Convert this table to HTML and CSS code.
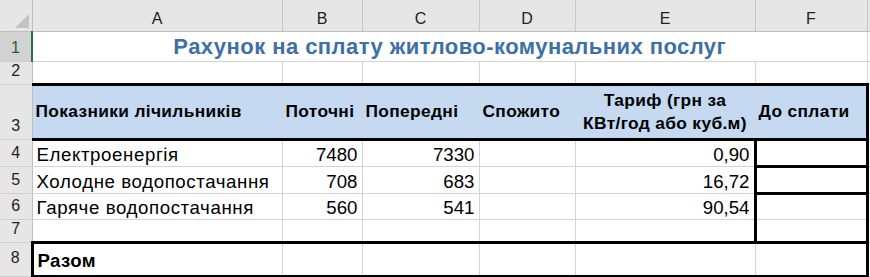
FILE: index.html
```html
<!DOCTYPE html>
<html lang="uk">
<head>
<meta charset="utf-8">
<link rel="stylesheet" href="styles.css">
</head>
<body>
<table class="sheet">
  <colgroup>
    <col class="c-rh"><col class="c-a"><col class="c-b"><col class="c-c"><col class="c-d"><col class="c-e"><col class="c-f"><col class="c-g">
  </colgroup>
  <tr class="r-colhdr">
    <th class="corner"><svg class="tri" width="14" height="14" viewBox="0 0 14 14"><polygon points="14,0 14,14 0,14" fill="#c3c3c3"/></svg></th>
    <th class="ch">A</th><th class="ch">B</th><th class="ch">C</th><th class="ch">D</th><th class="ch">E</th><th class="ch">F</th><th class="ch"></th>
  </tr>
  <tr class="r1">
    <th class="rh sel">1</th>
    <td colspan="6" class="title">Рахунок на сплату житлово-комунальних послуг</td>
    <td></td>
  </tr>
  <tr class="r2">
    <th class="rh">2</th><td></td><td></td><td></td><td></td><td></td><td></td><td></td>
  </tr>
  <tr class="r3">
    <th class="rh rh-low">3</th>
    <td class="hd">Показники лічильників</td>
    <td class="hd">Поточні</td>
    <td class="hd">Попередні</td>
    <td class="hd">Спожито</td>
    <td class="hd hd-c">Тариф (грн за<br>КВт/год або куб.м)</td>
    <td class="hd fr">До сплати</td>
    <td></td>
  </tr>
  <tr class="r4">
    <th class="rh">4</th><td class="txt">Електроенергія</td><td class="num">7480</td><td class="num">7330</td><td></td><td class="num">0,90</td><td class="fbox fbot"></td><td></td>
  </tr>
  <tr class="r5">
    <th class="rh">5</th><td class="txt">Холодне водопостачання</td><td class="num">708</td><td class="num">683</td><td></td><td class="num">16,72</td><td class="fbox fbot"></td><td></td>
  </tr>
  <tr class="r6">
    <th class="rh">6</th><td class="txt">Гаряче водопостачання</td><td class="num">560</td><td class="num">541</td><td></td><td class="num">90,54</td><td class="fbox"></td><td></td>
  </tr>
  <tr class="r7">
    <th class="rh">7</th><td></td><td></td><td></td><td></td><td></td><td class="fbox"></td><td></td>
  </tr>
  <tr class="r8">
    <th class="rh rh-8">8</th>
    <td class="tot tot-l">Разом</td><td class="tot"></td><td class="tot"></td><td class="tot"></td><td class="tot"></td><td class="tot fr"></td><td></td>
  </tr>
</table>
</body>
</html>
```

FILE: styles.css
```css
html, body {
  margin: 0;
  padding: 0;
  background: #ffffff;
  overflow: hidden;
}

.sheet {
  border-collapse: collapse;
  table-layout: fixed;
  width: 900px;
  font-family: "Liberation Sans", Arial, sans-serif;
  color: #000;
}

.c-rh { width: 32px; }
.c-a { width: 250px; }
.c-b { width: 80px; }
.c-c { width: 117px; }
.c-d { width: 96px; }
.c-e { width: 180px; }
.c-f { width: 112px; }
.c-g { width: 33px; }

.sheet td,
.sheet th {
  padding: 0 4px;
  border: 1px solid #d4d4d4;
  white-space: nowrap;
  overflow: hidden;
  vertical-align: bottom;
  font-weight: normal;
  font-size: 18.67px;
  line-height: 22px;
}

.sheet .txt { letter-spacing: 0.6px; }

/* column header */
.r-colhdr { height: 31px; }
.r-colhdr th {
  background: #e6e6e6;
  border-top: none;
  border-left: none;
  border-right: 1px solid #c6c6c6;
  border-bottom: 1px solid #bfbfbf;
  font-size: 16px;
  line-height: 18px;
  padding: 0 0 3px;
  text-align: center;
  color: #222;
}
.r-colhdr .corner {
  border-right: 1px solid #bfbfbf;
}
.corner .tri {
  display: block;
  margin: 0 3px 0 auto;
}

/* row headers */
.sheet .rh {
  background: #e6e6e6;
  border-left: none;
  border-top: 1px solid #d0d0d0;
  border-bottom: 1px solid #d0d0d0;
  border-right: 1px solid #bfbfbf;
  font-size: 16px;
  line-height: 18px;
  padding: 0 0 4px;
  text-align: center;
  color: #222;
}
.sheet .rh.sel {
  background: #d2d2d2;
  border-right: 2px solid #217346;
  color: #1b5e3a;
}
.sheet .rh-8 { padding-bottom: 9px; }

.r1 { height: 30px; }
.r2 { height: 23px; }
.r3 { height: 55px; }
.r4 { height: 27px; }
.r5 { height: 27px; }
.r6 { height: 26px; }
.r7 { height: 23px; }
.r8 { height: 34px; }

.sheet .title {
  text-align: center;
  vertical-align: bottom;
  font-weight: bold;
  font-size: 22px;
  line-height: 26px;
  letter-spacing: 0.45px;
  color: #3e6fa6;
  padding-bottom: 1px;
}

.sheet .hd {
  background: #c5d9f1;
  font-weight: bold;
  font-size: 17.33px;
  line-height: 23.5px;
  letter-spacing: 0.35px;
  vertical-align: middle;
  border-top: 3px solid #000;
  border-bottom: 3px solid #000;
  padding: 1px 3px 0;
}
.sheet .hd-c { text-align: center; }
.sheet .fr { border-right: 3px solid #000; }

.sheet .num { text-align: right; }

.sheet .fbox {
  border-left: 3px solid #000;
  border-right: 3px solid #000;
}
.sheet .fbot { border-bottom: 3px solid #000; }

.sheet .tot {
  border-top: 3px solid #000;
  border-bottom: 3px solid #000;
  font-weight: bold;
  letter-spacing: 0.4px;
  padding-bottom: 3px;
}
.sheet .tot-l { border-left: 3px solid #000; }
```
